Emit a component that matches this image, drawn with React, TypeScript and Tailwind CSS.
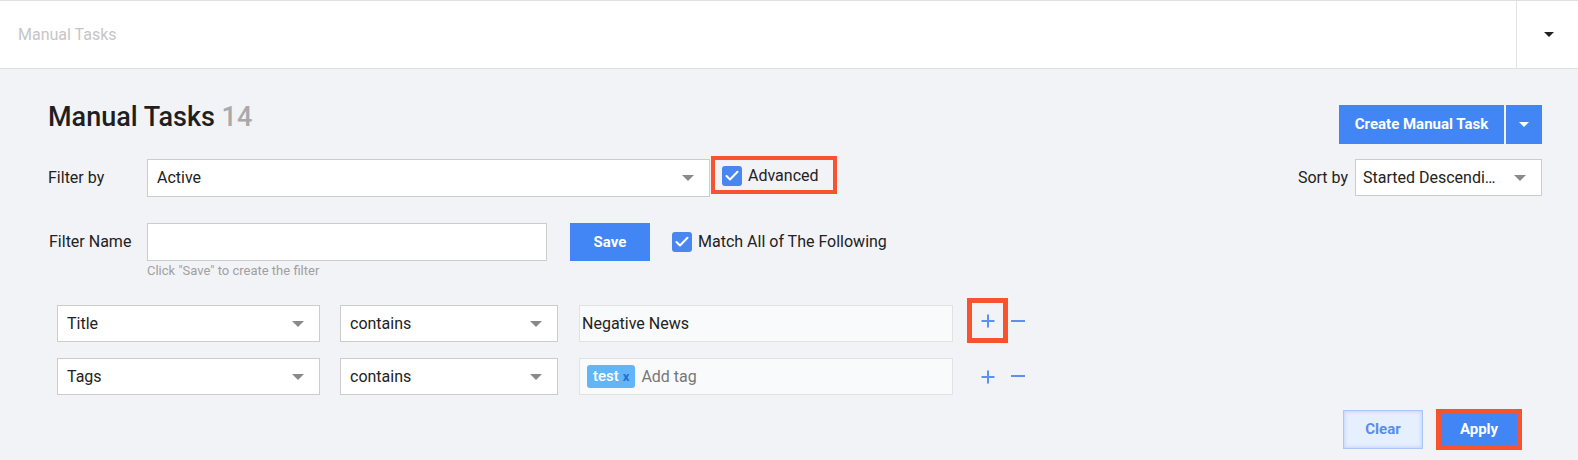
import React from "react";

function Caret({ color = "#8a8a8a", w = 12, h = 6 }: { color?: string; w?: number; h?: number }) {
  return (
    <svg width={w} height={h} viewBox={`0 0 ${w} ${h}`} className="shrink-0">
      <polygon points={`0,0 ${w},0 ${w / 2},${h}`} fill={color} />
    </svg>
  );
}

function CheckBox() {
  return (
    <span className="flex h-[20px] w-[20px] shrink-0 items-center justify-center rounded-[3px] bg-[#4a86f0]">
      <svg width="14" height="12" viewBox="0 0 14 12">
        <polyline points="1.5,6 5,9.5 12.5,1.8" fill="none" stroke="#ffffff" strokeWidth="2" strokeLinecap="round" strokeLinejoin="round" />
      </svg>
    </span>
  );
}

function Select({ label, width, height = 37, caretRight = 15, padLeft = 9 }: { label: string; width: number; height?: number; caretRight?: number; padLeft?: number }) {
  return (
    <div
      className="flex shrink-0 items-center justify-between border border-[#cccccc] bg-white text-[16px] text-[#222]"
      style={{ width, height, paddingLeft: padLeft, paddingRight: caretRight }}
    >
      <span className="truncate">{label}</span>
      <Caret />
    </div>
  );
}

function PlusIcon() {
  return (
    <svg width="14" height="14" viewBox="0 0 14 14">
      <path d="M7 0.5V13.5M0.5 7H13.5" stroke="#5f90f0" strokeWidth="2" />
    </svg>
  );
}

function MinusIcon() {
  return (
    <svg width="14" height="14" viewBox="0 0 14 14">
      <path d="M0 7H14" stroke="#5f90f0" strokeWidth="2" />
    </svg>
  );
}

function ConditionRow({ field, children, marked }: { field: string; children: React.ReactNode; marked?: boolean }) {
  return (
    <div className="flex h-[37px] items-center">
      <Select label={field} width={263} />
      <div className="ml-[20px]">
        <Select label="contains" width={218} />
      </div>
      <div className="ml-[21px] flex h-[37px] w-[374px] items-center border border-[#e2e2e2] bg-[#f9fafb] text-[16px] text-[#222]">
        {children}
      </div>
      <div
        className={`ml-[14px] flex h-[45px] w-[41px] items-center justify-center border-[5px] ${
          marked ? "-mt-[6px] border-[#f8532f]" : "border-transparent"
        }`}
      >
        <PlusIcon />
      </div>
      <div className={`ml-[3px] flex ${marked ? "-mt-[6px]" : "-mt-[2px]"}`}>
        <MinusIcon />
      </div>
    </div>
  );
}

export default function App() {
  return (
    <div className="h-[460px] w-[1578px] overflow-hidden bg-[#f2f3f7] font-['Roboto',sans-serif] text-[#222]">
      {/* top bar */}
      <div className="flex h-[69px] border-b border-t border-[#e0e0e0] bg-white">
        <div className="flex flex-1 items-center pl-[18px] text-[16px] text-[#c6c6c6]">Manual Tasks</div>
        <div className="flex w-[62px] items-center justify-center border-l border-[#e3e3e3] pl-[2px]">
          <Caret color="#222" w={10} h={5} />
        </div>
      </div>

      <div className="pl-[48px] pr-[36px] pt-[32px]">
        {/* title + create */}
        <div className="flex items-start justify-between">
          <h1 className="text-[27px] font-medium leading-[33px] text-[#1f1f1f]">
            Manual Tasks <span className="text-[#a9a9a9]">14</span>
          </h1>
          <div className="mt-[4px] flex gap-[2px]">
            <button className="h-[39px] w-[165px] bg-[#4285f4] text-[15px] font-bold text-white">Create Manual Task</button>
            <button className="flex h-[39px] w-[36px] items-center justify-center bg-[#4285f4]">
              <Caret color="#ffffff" w={10} h={5} />
            </button>
          </div>
        </div>

        {/* filter by / sort by */}
        <div className="mt-[15px] flex items-start justify-between">
          <div className="flex items-start">
            <div className="flex h-[38px] w-[99px] items-center text-[16px]">Filter by</div>
            <Select label="Active" width={563} height={38} caretRight={15} padLeft={9} />
            <div className="-mt-[3px] ml-[1px] flex h-[38px] w-[126px] items-center border-[4px] border-[#f8532f] pl-[7px] pt-[1px]">
              <CheckBox />
              <span className="ml-[6px] text-[16px] leading-[20px]">Advanced</span>
            </div>
          </div>
          <div className="flex items-center">
            <span className="text-[16px]">Sort by</span>
            <div className="ml-[7px]">
              <Select label="Started Descendi…" width={187} height={37} caretRight={15} padLeft={7} />
            </div>
          </div>
        </div>

        {/* filter name */}
        <div className="mt-[26px] flex h-[38px] items-center">
          <div className="w-[99px] pl-[1px] text-[16px]">Filter Name</div>
          <div className="h-[38px] w-[400px] border border-[#cccccc] bg-white" />
          <button className="ml-[23px] h-[38px] w-[80px] bg-[#4285f4] text-[15px] font-bold text-white">Save</button>
          <div className="ml-[22px] flex items-center">
            <CheckBox />
            <span className="ml-[6px] text-[16px]">Match All of The Following</span>
          </div>
        </div>
        <div className="mt-[2px] pl-[99px] text-[13px] leading-[16px] text-[#a0a0a0]">Click "Save" to create the filter</div>

        {/* conditions */}
        <div className="ml-[9px] mt-[26px] flex flex-col gap-[16px]">
          <ConditionRow field="Title" marked>
            <span className="pl-[2px]">Negative News</span>
          </ConditionRow>
          <ConditionRow field="Tags">
            <span className="ml-[7px] flex h-[23px] items-center rounded-[3px] bg-[#64b5f6] px-[6px] text-[15px] font-medium text-white">
              test<span className="ml-[4px] text-[13px] font-bold text-[#1e6fd9]">x</span>
            </span>
            <span className="ml-[6px] text-[16px] text-[#777]">Add tag</span>
          </ConditionRow>
        </div>

        {/* actions */}
        <div className="mt-[14px] flex items-center justify-end pr-[20px]">
          <button className="h-[39px] w-[80px] border border-[#a9c7f7] bg-[#e6effd] text-[15px] font-bold text-[#5a8cef] shadow-[inset_0_0_4px_rgba(120,160,240,0.45)]">
            Clear
          </button>
          <div className="ml-[13px] flex h-[41px] w-[86px] items-center justify-center border-[5px] border-[#f8532f] bg-[#4285f4] text-[15px] font-bold text-white">
            Apply
          </div>
        </div>
      </div>
    </div>
  );
}
